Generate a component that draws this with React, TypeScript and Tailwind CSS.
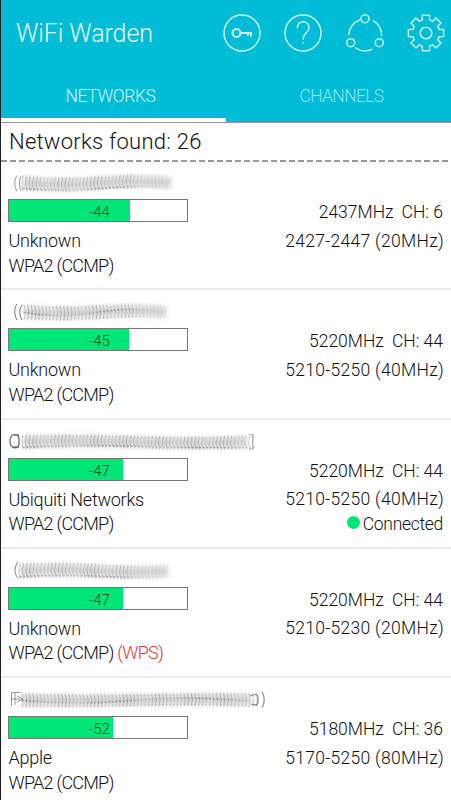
import type { ReactNode } from "react";

interface ScribbleShape {
  start: number;
  end: number;
  wave: number;
  flip: boolean;
  fade: boolean;
  head: ReactNode;
  tail?: ReactNode;
}

interface Network {
  id: number;
  scribble: ScribbleShape;
  signal: number;
  fill: number;
  vendor: string;
  wps?: boolean;
  frequency: string;
  channel: number;
  range: string;
  connected?: boolean;
}

const networks: Network[] = [
  {
    id: 1,
    scribble: {
      start: 23,
      end: 183,
      wave: 1.6,
      flip: false,
      fade: true,
      head: <path d="M17 14.5c-3 4-3 11 0 16M21 15c-2 4-2 10 0 15" strokeOpacity=".5" />,
    },
    signal: -44,
    fill: 121,
    vendor: "Unknown",
    frequency: "2437MHz",
    channel: 6,
    range: "2427-2447 (20MHz)",
  },
  {
    id: 2,
    scribble: {
      start: 24,
      end: 178,
      wave: 1.2,
      flip: true,
      fade: true,
      head: <path d="M17 14c-3 4-3 11 0 16M22 15c-3 4-3 10 0 15" strokeOpacity=".7" />,
    },
    signal: -45,
    fill: 119.5,
    vendor: "Unknown",
    frequency: "5220MHz",
    channel: 44,
    range: "5210-5250 (40MHz)",
  },
  {
    id: 3,
    scribble: {
      start: 23,
      end: 259,
      wave: -1,
      flip: false,
      fade: false,
      head: (
        <path d="M19 18c-1-5-9-5-9 3 0 9 9 8 9 3v-6M14 15h5M14 27h5" strokeOpacity=".75" strokeWidth="1.3" />
      ),
      tail: <path d="M249 14.5h4V29h-4" strokeOpacity=".4" />,
    },
    signal: -47,
    fill: 114,
    vendor: "Ubiquiti Networks",
    frequency: "5220MHz",
    channel: 44,
    range: "5210-5250 (40MHz)",
    connected: true,
  },
  {
    id: 4,
    scribble: {
      start: 20,
      end: 180,
      wave: -1.2,
      flip: false,
      fade: true,
      head: <path d="M18 13c-4 5-4 12 0 16" strokeOpacity=".65" />,
    },
    signal: -47,
    fill: 114,
    vendor: "Unknown",
    wps: true,
    frequency: "5220MHz",
    channel: 44,
    range: "5210-5230 (20MHz)",
  },
  {
    id: 5,
    scribble: {
      start: 22,
      end: 262,
      wave: 0.6,
      flip: true,
      fade: false,
      head: <path d="M11.500 28V14.500h9M15 15v12M11.500 21h9M17 18l6 3-6 3" strokeOpacity=".5" />,
      tail: <path d="M262 14c3 4 3 11 0 15.500M250 18q8-3 8 0v7q0 3-7 1" strokeOpacity=".6" strokeWidth="1.2" />,
    },
    signal: -52,
    fill: 103.5,
    vendor: "Apple",
    frequency: "5180MHz",
    channel: 36,
    range: "5170-5250 (80MHz)",
  },
];

// Eight-tooth gear outline centred on 20,20
const gearPath = (() => {
  const points: string[] = [];
  for (let tooth = 0; tooth < 8; tooth++) {
    const middle = (tooth * Math.PI) / 4;
    const corners = [
      [-0.27, 13.6],
      [-0.2, 18],
      [0.2, 18],
      [0.27, 13.6],
    ];
    for (const [angle, radius] of corners) {
      const x = 20 + radius * Math.sin(middle + angle);
      const y = 20 - radius * Math.cos(middle + angle);
      points.push(`${x.toFixed(2)} ${y.toFixed(2)}`);
    }
  }
  return `M${points.join("L")}Z`;
})();

function ActionIcon({ label, children }: { label: string; children: ReactNode }) {
  return (
    <button aria-label={label} className="h-10 w-10 shrink-0" type="button">
      <svg
        className="size-10"
        fill="none"
        stroke="#c9f5ec"
        strokeLinecap="round"
        strokeLinejoin="round"
        strokeWidth="1.5"
        viewBox="0 0 40 40"
      >
        {children}
      </svg>
    </button>
  );
}

function Scribble({ shape }: { shape: ScribbleShape }) {
  const { start, end, wave, flip, fade, head, tail } = shape;
  const length = end - start;
  const count = Math.floor(length / 3.6);
  const centreAt = (t: number) => 22 + wave * Math.sin(t * Math.PI * 2);
  const steps = Array.from({ length: 21 }, (_, i) => i / 20);
  const haze = steps.map((t) => `${start + t * (length - 12)} ${centreAt(t)}`).join("L");

  return (
    <svg className="block h-[38px] w-[280px]" fill="none" stroke="#3c3c3c" viewBox="0 0 280 38">
      <path className="blur-[2px]" d={`M${haze}`} strokeOpacity=".13" strokeWidth="13" />
      <path className="blur-[2px]" d={`M${haze}`} strokeOpacity=".12" strokeWidth="5" />
      {Array.from({ length: count }, (_, i) => {
        const t = i / count;
        const x = start + i * 3.6;
        const y = centreAt(t);
        const half = fade ? 8 - 0.8 * t : 7.5 - Math.sin(t * Math.PI) * 0.8;
        const strength = fade && t > 0.6 ? (1 - t) * 2.4 : 1;
        const mark = flip ? y + 2 * Math.sin(t * 7) : y + half - 3;
        return (
          <g key={i} opacity={strength}>
            <path
              d={`M${x} ${y - half}q${flip ? 2.5 : -2.5} ${half} 0 ${half * 2}`}
              opacity={0.2 + 0.08 * Math.sin(i * 0.7)}
              strokeWidth=".9"
            />
            <path d={`M${x - 0.5} ${mark}l2.200 1`} opacity={0.24 + 0.14 * Math.cos(i * 0.25)} strokeWidth="1.2" />
            <path d={`M${x} ${y + half - 1.5}l1.500 -.5`} opacity=".22" />
            <path d={`M${x - 1} ${y - half + 2}l2 .5`} opacity=".15" />
          </g>
        );
      })}
      {head}
      {tail}
    </svg>
  );
}

function SignalBar({ signal, fill }: { signal: number; fill: number }) {
  return (
    <div className="relative -ml-px h-[23px] w-[180px] border border-[#777]">
      <div className="h-full bg-[#00e676]" style={{ width: fill }} />
      <span className="absolute right-[77px] top-0 text-[15px] leading-[24px] tracking-[0.1px] text-[#0d3d22]">
        {signal}
      </span>
    </div>
  );
}

function NetworkRow({ network }: { network: Network }) {
  return (
    <li className="flex h-[129.25px] justify-between border-b-2 border-[#ebebeb] px-2">
      <div className="w-0">
        <div className="-ml-[9px] w-[280px]">
          <Scribble shape={network.scribble} />
        </div>
        <SignalBar fill={network.fill} signal={network.signal} />
        <div className="-ml-[0.5px] whitespace-nowrap pt-[7px] text-[18px] leading-[24.5px]">
          <p className="tracking-[-0.25px]">{network.vendor}</p>
          <p className="tracking-[-0.75px]">
            WPA2 (CCMP) {network.wps ? <span className="text-[#e53935]">(WPS)</span> : null}
          </p>
        </div>
      </div>
      <div className="pt-[37px] text-right text-[17.5px]">
        <p className="leading-[28.5px]">
          {network.frequency}
          <span className="ml-2">CH: {network.channel}</span>
        </p>
        <p className="-mr-px leading-[28.5px] tracking-[0.3px]">{network.range}</p>
        {network.connected ? (
          <p className="-mt-0.5 flex items-center justify-end gap-[3px] leading-[24.5px] tracking-[-0.3px]">
            <span className="-mt-0.5 size-[13px] rounded-full bg-[#00e676]" />
            Connected
          </p>
        ) : null}
      </div>
    </li>
  );
}

export default function App() {
  return (
    <main className="h-[800px] w-[451px] overflow-hidden border-l border-[#222] bg-white font-['Roboto',sans-serif] font-light text-[#111]">
      <header className="h-[123px] border-b border-[#999] bg-[#00bcd7]">
        <div className="flex h-[65px] items-center">
          <h1 className="w-[220.500px] pl-[15px] pt-0.5 text-[25px] tracking-[-0.1px] text-[#e9fbf9]">WiFi Warden</h1>
          <div className="flex gap-[21.5px]">
            <ActionIcon label="Passwords">
              <circle cx="20" cy="20" r="18" />
              <g strokeWidth="2">
                <circle cx="14.5" cy="20" r="4" />
                <path d="M19 20h10v3M26 20v2" />
              </g>
            </ActionIcon>
            <ActionIcon label="Help">
              <circle cx="20" cy="20" r="18" />
              <path d="M14.5 14.5c0-8 11.5-7.500 11.500 0 0 5.500-5.800 5-5.800 11.500M20.200 29.700v.3" />
            </ActionIcon>
            <ActionIcon label="Share">
              <circle cx="20" cy="5.700" r="4" />
              <circle cx="5.700" cy="29.700" r="4" />
              <circle cx="34.300" cy="29.700" r="4" />
              <path d="M3.800 21.500a16.500 16.500 0 0 1 10.800-14.500M28.500 7.800a16.500 16.500 0 0 1 8 15M10.800 35a16.500 16.500 0 0 0 16.200 1.200" />
            </ActionIcon>
            <ActionIcon label="Settings">
              <path d={gearPath} />
              <circle cx="20" cy="20" r="5.800" />
            </ActionIcon>
          </div>
        </div>
        <nav className="flex h-[57px] text-center text-[17.5px] leading-[63px]">
          <button className="w-[225px] border-b-4 border-white pr-1.5 tracking-[-0.4px] text-[#d4f8f5]" type="button">
            NETWORKS
          </button>
          <button className="flex-1 pl-1.5 pb-1 tracking-[-0.65px] text-[#8ae5ec]" type="button">
            CHANNELS
          </button>
        </nav>
      </header>
      <p className="h-[37px] pl-2 text-[22px] leading-[38px] tracking-[0.25px]">Networks found: 26</p>
      <svg className="-mb-px block h-0.5 w-full" stroke="#999" strokeDasharray="6 3" strokeWidth="2">
        <path d="M0 1h450" />
      </svg>
      <ul>
        {networks.map((network) => (
          <NetworkRow key={network.id} network={network} />
        ))}
      </ul>
    </main>
  );
}
